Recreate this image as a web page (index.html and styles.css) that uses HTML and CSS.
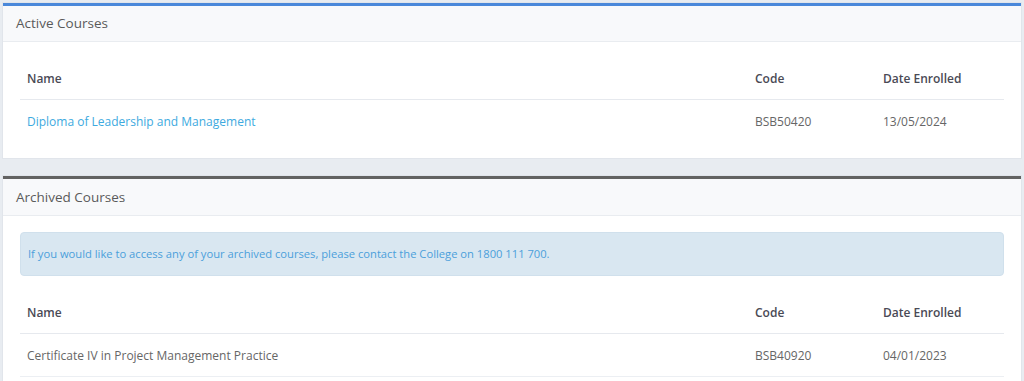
FILE: index.html
```html
<!DOCTYPE html>
<html lang="en">
<head>
  <meta charset="UTF-8" />
  <title>My Courses</title>
  <link rel="stylesheet" href="styles.css">
</head>
<body>
  <div class="panel panel-active">
    <div class="panel-heading">Active Courses</div>
    <div class="panel-body">
      <table class="course-table">
        <thead>
          <tr>
            <th class="col-name">Name</th>
            <th class="col-code">Code</th>
            <th class="col-date">Date Enrolled</th>
          </tr>
        </thead>
        <tbody>
          <tr>
            <td><a href="#">Diploma of Leadership and Management</a></td>
            <td>BSB50420</td>
            <td>13/05/2024</td>
          </tr>
        </tbody>
      </table>
    </div>
  </div>

  <div class="panel panel-archived">
    <div class="panel-heading">Archived Courses</div>
    <div class="panel-body">
      <div class="alert-info">If you would like to access any of your archived courses, please contact the College on 1800 111 700.</div>
      <table class="course-table">
        <thead>
          <tr>
            <th class="col-name">Name</th>
            <th class="col-code">Code</th>
            <th class="col-date">Date Enrolled</th>
          </tr>
        </thead>
        <tbody>
          <tr>
            <td>Certificate IV in Project Management Practice</td>
            <td>BSB40920</td>
            <td>04/01/2023</td>
          </tr>
        </tbody>
      </table>
    </div>
  </div>
</body>
</html>
```

FILE: styles.css
```css
body {
  margin: 0;
  padding: 3px 3px;
  background: #e8ecf1;
  font-family: "Open Sans", "Liberation Sans", sans-serif;
  color: #666;
}

.panel {
  background: white;
  border-top: 3px solid #4a88da;
  box-shadow: 0 0 0 1px #e1e5eb;
  margin-bottom: 18px;
}
.panel-archived {
  border-top-color: #626262;
}

.panel-heading {
  height: 35px;
  line-height: 35px;
  padding: 0 13px;
  font-size: 13.5px;
  color: #5a5a5a;
  background: #f8f9fb;
  border-bottom: 1px solid #e9ecf0;
}

.panel-body {
  padding: 16px 17px 16px;
}
.panel-archived .panel-heading {
  height: 36px;
  line-height: 37px;
}
.panel-archived .panel-body {
  padding-top: 16px;
}

.alert-info {
  background: #d9e7f1;
  border: 1px solid #d0e0ec;
  border-radius: 4px;
  color: #4b9fdb;
  font-size: 11.2px;
  height: 42px;
  line-height: 42px;
  padding: 0 7px;
  margin-bottom: 16px;
}

.course-table {
  width: 100%;
  border-collapse: collapse;
  font-size: 12px;
}
.course-table th {
  text-align: left;
  font-weight: 600;
  color: #4a4a55;
  height: 41px;
  padding: 0 7px;
  border-bottom: 1px solid #e6e9ee;
}
.course-table td {
  height: 42px;
  padding: 0 7px;
  color: #666;
}
.panel-archived .course-table td {
  border-bottom: 1px solid #eceff3;
}
.course-table .col-code,
.course-table .col-date {
  width: 114px;
}
.course-table a {
  color: #3daae0;
  text-decoration: none;
}
```
